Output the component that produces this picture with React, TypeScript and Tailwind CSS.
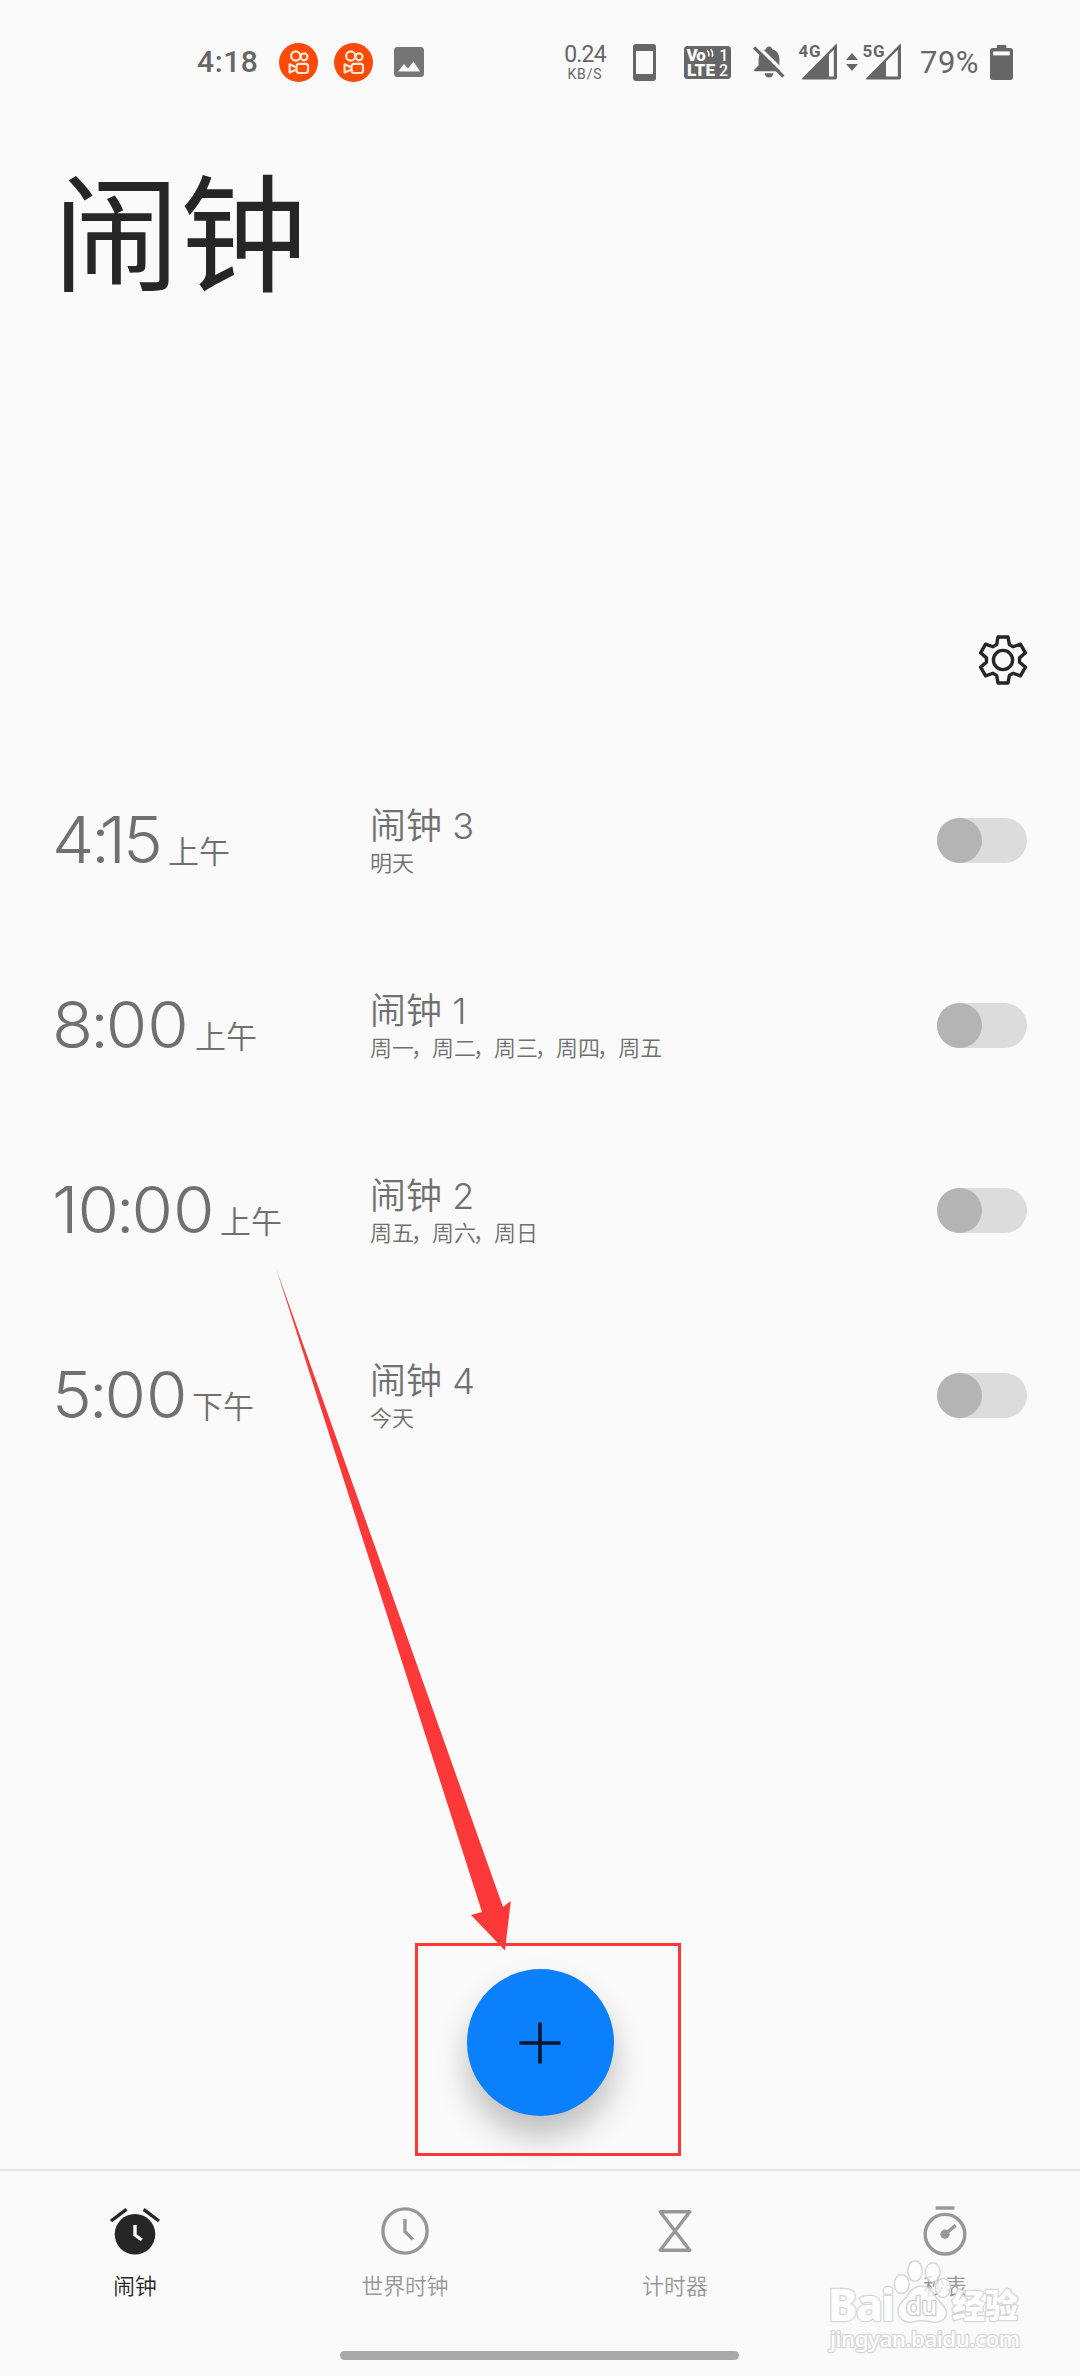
// Alarm tab of the clock app

import type { ReactNode } from 'react'

interface Alarm {
	id: number
	time: string
	period: string
	name: string
	days: string[]
	timeClass: string
}

// ── Data ──────────────────────────────────────────────────────

const ALARMS: Alarm[] = [
	{ id: 3, time: '4:15', period: '上午', name: '闹钟 3', days: ['明天'], timeClass: 'w-[116px]' },
	{ id: 1, time: '8:00', period: '上午', name: '闹钟 1', days: ['周一', '周二', '周三', '周四', '周五'], timeClass: 'w-[143px]' },
	{ id: 2, time: '10:00', period: '上午', name: '闹钟 2', days: ['周五', '周六', '周日'], timeClass: 'w-[168px]' },
	{ id: 4, time: '5:00', period: '下午', name: '闹钟 4', days: ['今天'], timeClass: 'w-[140px]' },
]

// Outline of the six-toothed gear, centred on the origin
const GEAR_POINTS = Array.from({ length: 6 }, (_, i) => {
	const a = (i * Math.PI) / 3
	const tooth = [[-6.4, -15.4], [-5, -23], [5, -23], [6.4, -15.4]]
	return tooth
		.map(([x, y]) => `${(x * Math.cos(a) - y * Math.sin(a)).toFixed(2)},${(x * Math.sin(a) + y * Math.cos(a)).toFixed(2)}`)
		.join(' ')
}).join(' ')

// ── Status bar icons ──────────────────────────────────────────

function CameraAppIcon() {
	return (
		<svg width="39" height="39" viewBox="0 0 39 39" fill="none" stroke="#ffe9d6" strokeWidth="2.2">
			<circle cx="19.5" cy="19.5" r="19.5" fill="#ff4906" stroke="none" />
			<circle cx="16.7" cy="13" r="4.6" />
			<circle cx="25" cy="13.8" r="3.5" />
			<rect x="17.6" y="20.8" width="11.4" height="9.2" rx="2.4" />
			<path d="M17 24.2 L10.6 21.3 V29.6 L17 26.7" strokeLinejoin="round" />
		</svg>
	)
}

function PictureIcon() {
	return (
		<svg width="30" height="30" viewBox="0 0 30 30">
			<rect width="30" height="30" rx="3.4" fill="#757575" />
			<path d="M4 24.6 L10 17 L14 21.6 L19.4 14.4 L26.2 24.6 Z" fill="#fafafa" />
		</svg>
	)
}

function PhoneIcon() {
	return (
		<svg width="23" height="37" viewBox="0 0 23 37">
			<rect width="23" height="37" rx="3" fill="#666" />
			<rect x="3" y="7" width="17" height="23" fill="#fafafa" />
		</svg>
	)
}

function VolteIcon() {
	return (
		<svg width="47" height="33" viewBox="0 0 47 33" fontFamily="Roboto, sans-serif" fontWeight="900" fill="#fafafa">
			<rect width="47" height="33" rx="3.5" fill="#666" />
			<text x="2.4" y="15" fontSize="17" textLength="19.5">Vo</text>
			<path d="M23 4.5 Q25.6 6.5 24.6 10.5 M26.5 3 Q29.6 6 28.2 11" fill="none" stroke="#fafafa" strokeWidth="1.5" />
			<text x="3" y="30" fontSize="17" textLength="28" lengthAdjust="spacingAndGlyphs">LTE</text>
			<text x="35.3" y="15.3" fontSize="16" fontWeight="500">1</text>
			<text x="35" y="30" fontSize="16" fontWeight="500">2</text>
		</svg>
	)
}

function MutedBellIcon() {
	return (
		<svg width="32" height="32" viewBox="0 0 32 32">
			<path d="M16 0.6 C17.8 0.6 18.8 1.6 19 3.2 C23.8 4.4 26.4 8.2 26.4 13 V20.5 L30.4 25.2 H1.2 V23.5 L5.6 19.6 V13 C5.6 8.2 8.2 4.4 13 3.2 C13.2 1.6 14.2 0.6 16 0.6 Z" fill="#666" />
			<path d="M11.5 27.2 H20.6 C20 30 18.5 31.6 16 31.6 S12 30 11.5 27.2 Z" fill="#666" />
			<path d="M3.6 -0.6 L33 28.2" stroke="#fafafa" strokeWidth="3.6" />
			<path d="M1 1.4 L30.4 30.6" stroke="#666" strokeWidth="3.2" />
		</svg>
	)
}

function SignalIcon({ label, cut }: { label: string, cut: number }) {
	return (
		<svg width="42" height="38" viewBox="-3 0 42 38">
			<path d="M38 2 V34.5 Q38 36.5 36 36.5 H3.4 Q2.6 36 3.4 35 L36.6 1.4 Q38 0.6 38 2 Z" fill="#666" />
			<path d={`M${cut} 33.5 V${41.6 - cut} L34.8 6.8 V33.5 Z`} fill="#fafafa" />
			<text x="-0.5" y="14" fontFamily="Roboto, sans-serif" fontWeight="700" fontSize="17" fill="#666" stroke="#fafafa" strokeWidth="3" paintOrder="stroke" textLength="22">{label}</text>
		</svg>
	)
}

function BatteryIcon() {
	return (
		<svg width="23" height="35" viewBox="0 0 23 35">
			<path d="M6.8 1 Q6.8 0 7.8 0 H15.4 Q16.4 0 16.4 1 V3 H20 Q23 3 23 6 V32 Q23 35 20 35 H3 Q0 35 0 32 V6 Q0 3 3 3 H6.8 Z" fill="#666" />
			<rect x="3.2" y="6.4" width="16.6" height="4" fill="#fafafa" />
		</svg>
	)
}

function StatusBar() {
	return (
		<div className="flex items-center h-[124px] shrink-0 pl-[197px] text-[#666] font-[Roboto,sans-serif]">
			<span className="w-[82px] shrink-0 text-[30px] leading-none font-medium tracking-[0.6px]">4:18</span>
			<CameraAppIcon />
			<div className="w-4 shrink-0" />
			<CameraAppIcon />
			<div className="w-[21px] shrink-0" />
			<PictureIcon />
			<div className="ml-[138px] w-[46px] shrink-0 flex flex-col items-center">
				<span className="text-[23px] leading-[24px] tracking-[-0.8px]">0.24</span>
				<span className="text-[14px] leading-[14px] tracking-[0.9px]">KB/S</span>
			</div>
			<div className="w-[25px] shrink-0" />
			<PhoneIcon />
			<div className="w-7 shrink-0" />
			<VolteIcon />
			<div className="w-[22px] shrink-0" />
			<MutedBellIcon />
			<div className="w-[11px] shrink-0" />
			<SignalIcon label="4G" cut={30} />
			<svg className="ml-2 mr-0.5 shrink-0" width="12" height="18" viewBox="0 0 12 18" fill="#666">
				<path d="M0 7 L6 0 L12 7 Z M0 11 L6 18 L12 11 Z" />
			</svg>
			<SignalIcon label="5G" cut={23} />
			<span className="ml-[18px] w-[70px] shrink-0 text-[31px] leading-none tracking-[0.5px]">79%</span>
			<BatteryIcon />
		</div>
	)
}

// ── Alarm list ────────────────────────────────────────────────

// Colon and "1" sit tighter than the other digits
function TimeText({ value }: { value: string }) {
	return (
		<span className="inline-block origin-left scale-x-105">
			{value.split('').map((ch, i) => {
				let spacing = ''
				if (ch === ':') spacing = '-ml-[3px] -mr-[3px]'
				if (ch === '1') spacing = i === 0 ? '-mr-px' : '-ml-[7px] -mr-[3px]'
				return <span key={i} className={spacing}>{ch}</span>
			})}
		</span>
	)
}

function AlarmRow({ alarm }: { alarm: Alarm }) {
	return (
		<li className="flex items-center h-[185px] text-[#707070]">
			<div className="flex items-baseline w-[318px] shrink-0 -mt-0.5">
				<span className={`${alarm.timeClass} shrink-0 whitespace-nowrap text-[64px] leading-none font-light font-[Inter,sans-serif]`}>
					<TimeText value={alarm.time} />
				</span>
				<span className="text-[31px] leading-none font-[350]">{alarm.period}</span>
			</div>
			<div className="grow">
				<p className="pt-0.5 text-[36px] leading-[38px] font-[350] font-[Inter,'Noto_Sans_CJK_SC',sans-serif]">{alarm.name}</p>
				<p className="text-[22px] leading-8 font-[350]">
					{alarm.days.map((day, i) => (
						<span key={day}>
							{i > 0 && <span className="-ml-[3px] -mr-px">，</span>}
							{day}
						</span>
					))}
				</p>
			</div>
			<button type="button" aria-label={alarm.name} className="w-[90px] h-[45px] rounded-full bg-[#dcdcdc] flex">
				<span className="size-[45px] rounded-full bg-[#b4b4b4]" />
			</button>
		</li>
	)
}

// ── Bottom navigation ─────────────────────────────────────────

function NavItem({ label, active, children }: { label: string, active?: boolean, children: ReactNode }) {
	return (
		<button type="button" className={`w-[270px] flex flex-col items-center ${active ? 'text-[#262626]' : 'text-[#979797]'}`}>
			<svg width="54" height="54" viewBox="-27 -27 54 54" fill="none" stroke="currentColor" strokeWidth="3.4">
				{children}
			</svg>
			<span className="mt-[11px] text-[21.8px] leading-8 font-[350]">{label}</span>
		</button>
	)
}

function BottomNav() {
	return (
		<nav className="flex h-[207px] shrink-0 border-t-2 border-[#e6e6e6] pt-[33px] items-start">
			<NavItem label="闹钟" active>
				<circle cy="3.3" r="20.3" fill="currentColor" stroke="none" />
				<path d="M-24 -10 L-8.6 -21.6 M24 -10 L8.6 -21.6" />
				<path d="M0 -6 V4 L6.8 9" stroke="#fff" />
			</NavItem>
			<NavItem label="世界时钟">
				<circle r="22.1" />
				<path d="M0 -12 V0.6 L7.8 8.4" />
			</NavItem>
			<NavItem label="计时器">
				<path d="M-14.8 -19.2 H14.8 L-14.8 19.2 H14.8 Z" strokeLinejoin="round" />
			</NavItem>
			<NavItem label="秒表">
				<path d="M-9.4 -23 H9.4" />
				<circle cy="3.2" r="19.8" />
				<circle cy="3.2" r="4.6" fill="currentColor" stroke="none" />
				<path d="M0 3.2 L10.6 -5.6" />
			</NavItem>
		</nav>
	)
}

function Watermark() {
	return (
		<svg className="absolute left-[820px] top-[2250px]" width="220" height="110" viewBox="820 2250 220 110" fill="#fff" stroke="#d4d4d4" strokeWidth="1.5" opacity="0.9">
			<ellipse cx="901.7" cy="2284" rx="7.4" ry="9.6" />
			<ellipse cx="915" cy="2271" rx="7.2" ry="10.2" />
			<ellipse cx="932.7" cy="2272.4" rx="7.4" ry="9.6" fillOpacity="0.8" />
			<ellipse cx="943" cy="2288" rx="7.6" ry="9.4" fillOpacity="0.8" />
			<path d="M922 2286 C928 2286 932 2290 935 2296 C939 2303 947 2306 946.5 2313 C946 2321 938 2323 932 2322 C925 2320 920 2320 913 2322 C905 2323 898.5 2320 898 2311 C898 2303 905 2300 908 2295 C911 2289 915 2286 922 2286 Z" fillOpacity="0.8" />
			<g fontFamily="'Noto Sans', sans-serif" paintOrder="stroke" strokeWidth="2.6" strokeLinejoin="round">
				<text x="828" y="2320.5" fontSize="44" fontWeight="800" textLength="67">Bai</text>
				<text x="906" y="2315" fontSize="26" fontWeight="500" stroke="#c6c6c6" textLength="31" lengthAdjust="spacingAndGlyphs">du</text>
				<text x="952" y="2318" fontSize="33" fontWeight="900" fontFamily="'Noto Sans CJK SC', sans-serif">经验</text>
				<text x="830" y="2346.5" fontSize="22.5" fontWeight="500" textLength="190">jingyan.baidu.com</text>
			</g>
		</svg>
	)
}

// ── Screen ────────────────────────────────────────────────────

export default function App() {
	return (
		<div className="relative flex flex-col w-[1080px] h-[2376px] overflow-hidden bg-[#fafafa] font-['Noto_Sans_CJK_SC',sans-serif]">
			<StatusBar />

			<h1 className="pl-[53px] pt-[23px] text-[127px] leading-[160px] text-[#262626]">闹钟</h1>

			<div className="flex justify-end pr-[51px] mt-[327px]">
				<svg width="52" height="52" viewBox="-26 -26 52 52" fill="none" stroke="#262626" strokeWidth="3.4" strokeLinejoin="round">
					<polygon points={GEAR_POINTS} />
					<circle r="9.6" />
				</svg>
			</div>

			<ul className="mt-[62px] pl-[52px] pr-[53px]">
				{ALARMS.map(a => <AlarmRow key={a.id} alarm={a} />)}
			</ul>

			<div className="grow flex flex-col justify-end items-center pb-[53px]">
				<button type="button" aria-label="添加" className="size-[147px] rounded-full bg-[#0b80fd] flex items-center justify-center shadow-[0_20px_32px_rgba(0,0,0,0.24)]">
					<svg width="42" height="42" viewBox="0 0 42 42" stroke="#06152b" strokeWidth="3.6">
						<path d="M21 0.5 V41.5 M0.5 21 H41.5" />
					</svg>
				</button>
			</div>

			<BottomNav />

			{/* home gesture bar */}
			<div className="absolute left-[340px] top-[2351px] w-[399px] h-[9px] rounded-full bg-[#a8a8a8]" />

			{/* arrow and frame that point at the add button */}
			<div className="absolute left-[415px] top-[1943px] w-[266px] h-[213px] border-[3px] border-[#fd3838]" />
			<svg className="absolute left-[270px] top-[1260px]" width="250" height="700" viewBox="270 1260 250 700">
				<path d="M276 1268 L503 1907 L510.8 1901 L505 1950.5 L471 1915 L482 1912 Z" fill="#fd3838" />
			</svg>

			<Watermark />
		</div>
	)
}
